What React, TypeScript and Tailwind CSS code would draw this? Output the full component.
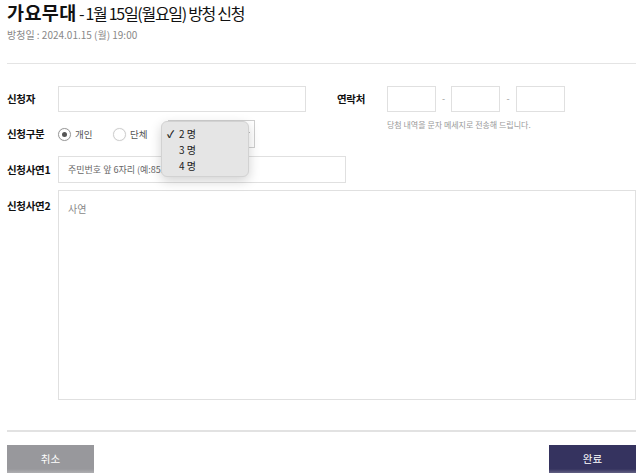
import React from "react";

const font = "font-['Noto_Sans_CJK_KR','Noto_Sans',sans-serif]";

function Radio({ checked, label }: { checked?: boolean; label: string }) {
    return (
        <label className="w-[55px] flex items-center gap-[4px]">
            <span className={`w-[13px] h-[13px] rounded-full border bg-white flex items-center justify-center shadow-[0_0_1px_rgba(0,0,0,0.15)] ${checked ? "border-[#9a9a9a]" : "border-[#d0d0d0]"}`}>
                {checked && <span className="w-[5px] h-[5px] rounded-full bg-[#555]" />}
            </span>
            <span className="text-[9.5px] text-[#555]">{label}</span>
        </label>
    );
}

export default function App() {
    return (
        <div className={`relative w-[640px] h-[476px] overflow-hidden bg-white text-[#111] ${font}`}>
            <div className="pl-[7px] pr-[4px]">
                <h1 className="text-[16px] leading-[24px] tracking-[-1.3px]">
                    <b className="font-bold text-[18.5px] tracking-[0.4px]">가요무대</b> - 1월 15일(월요일) 방청 신청
                </h1>
                <p className="mt-[3px] text-[10px] leading-[14px] text-[#888]">방청일 : 2024.01.15 (월) 19:00</p>

                <div className="mt-[21px] h-px bg-[#e4e4e4]" />

                {/* 신청자 / 연락처 */}
                <div className="mt-[22px] flex">
                    <div className="w-[330px] flex items-center">
                        <div className="w-[51px] text-[10.5px] font-bold tracking-[-0.3px]">신청자</div>
                        <div className="w-[248px] h-[26px] border border-[#e0e0e0]" />
                    </div>
                    <div className="flex items-center">
                        <div className="w-[50px] text-[10.5px] font-bold tracking-[-0.3px]">연락처</div>
                        <div className="w-[49px] h-[26px] border border-[#e0e0e0]" />
                        <div className="w-[15px] text-center text-[9px] text-[#999]">-</div>
                        <div className="w-[49px] h-[26px] border border-[#e0e0e0]" />
                        <div className="w-[16px] text-center text-[9px] text-[#999]">-</div>
                        <div className="w-[49px] h-[26px] border border-[#e0e0e0]" />
                    </div>
                </div>

                {/* 신청구분 */}
                <div className="mt-[8px] flex">
                    <div className="w-[330px] flex items-center h-[28px]">
                        <div className="w-[51px] text-[10.5px] font-bold tracking-[-0.3px]">신청구분</div>
                        <Radio checked label="개인" />
                        <Radio label="단체" />
                        <div className="w-[87px] h-[28px] border border-[#cfcfcf] flex items-center justify-end pr-[4px]">
                            <svg width="6" height="4" viewBox="0 0 6 4" fill="none" stroke="#777" strokeWidth="1"><path d="M0.5 0.5 3 3 5.5 0.5" /></svg>
                        </div>
                    </div>
                    <div className="pl-[50px] text-[8px] leading-[10px] text-[#999]">당첨 내역을 문자 메세지로 전송해 드립니다.</div>
                </div>

                {/* 신청사연1 */}
                <div className="mt-[8px] flex items-center">
                    <div className="w-[51px] text-[10.5px] font-bold tracking-[-0.3px]">신청사연1</div>
                    <div className="w-[288px] h-[27px] border border-[#e0e0e0] flex items-center px-[9px] text-[9px] text-[#666]">
                        주민번호 앞 6자리 (예:851010)
                    </div>
                </div>

                {/* 신청사연2 */}
                <div className="mt-[7px] flex items-start">
                    <div className="w-[51px] pt-[8px] text-[10.5px] font-bold tracking-[-0.3px]">신청사연2</div>
                    <div className="w-[578px] h-[210px] border border-[#e0e0e0] px-[9px] pt-[10px] text-[10px] text-[#888]">사연</div>
                </div>

                <div className="mt-[30px] h-[2px] bg-[#e2e2e2]" />

                <div className="mt-[13px] flex justify-between">
                    <button className="w-[87px] h-[28px] bg-[#98989c] text-white text-[10.5px]">취소</button>
                    <button className="w-[87px] h-[28px] bg-[#35335f] text-white text-[10.5px]">완료</button>
                </div>
            </div>

            {/* open select menu */}
            <div className="absolute left-[161px] top-[121px] w-[88px] h-[56px] rounded-[6px] bg-[#e5e5e5] border border-[#d2d2d2] shadow-[0_4px_12px_rgba(0,0,0,0.18)] py-[3px] text-[10px] text-[#222]">
                {["2 명", "3 명", "4 명"].map((v, i) => (
                    <div key={v} className="h-[16px] flex items-center pl-[5px]">
                        <span className="w-[12px] text-[10px] font-bold">{i === 0 ? "✓" : ""}</span>
                        <span>{v}</span>
                    </div>
                ))}
            </div>

            <div className="absolute left-0 right-0 bottom-0 h-[7px] bg-gradient-to-b from-transparent to-white/40" />
        </div>
    );
}
